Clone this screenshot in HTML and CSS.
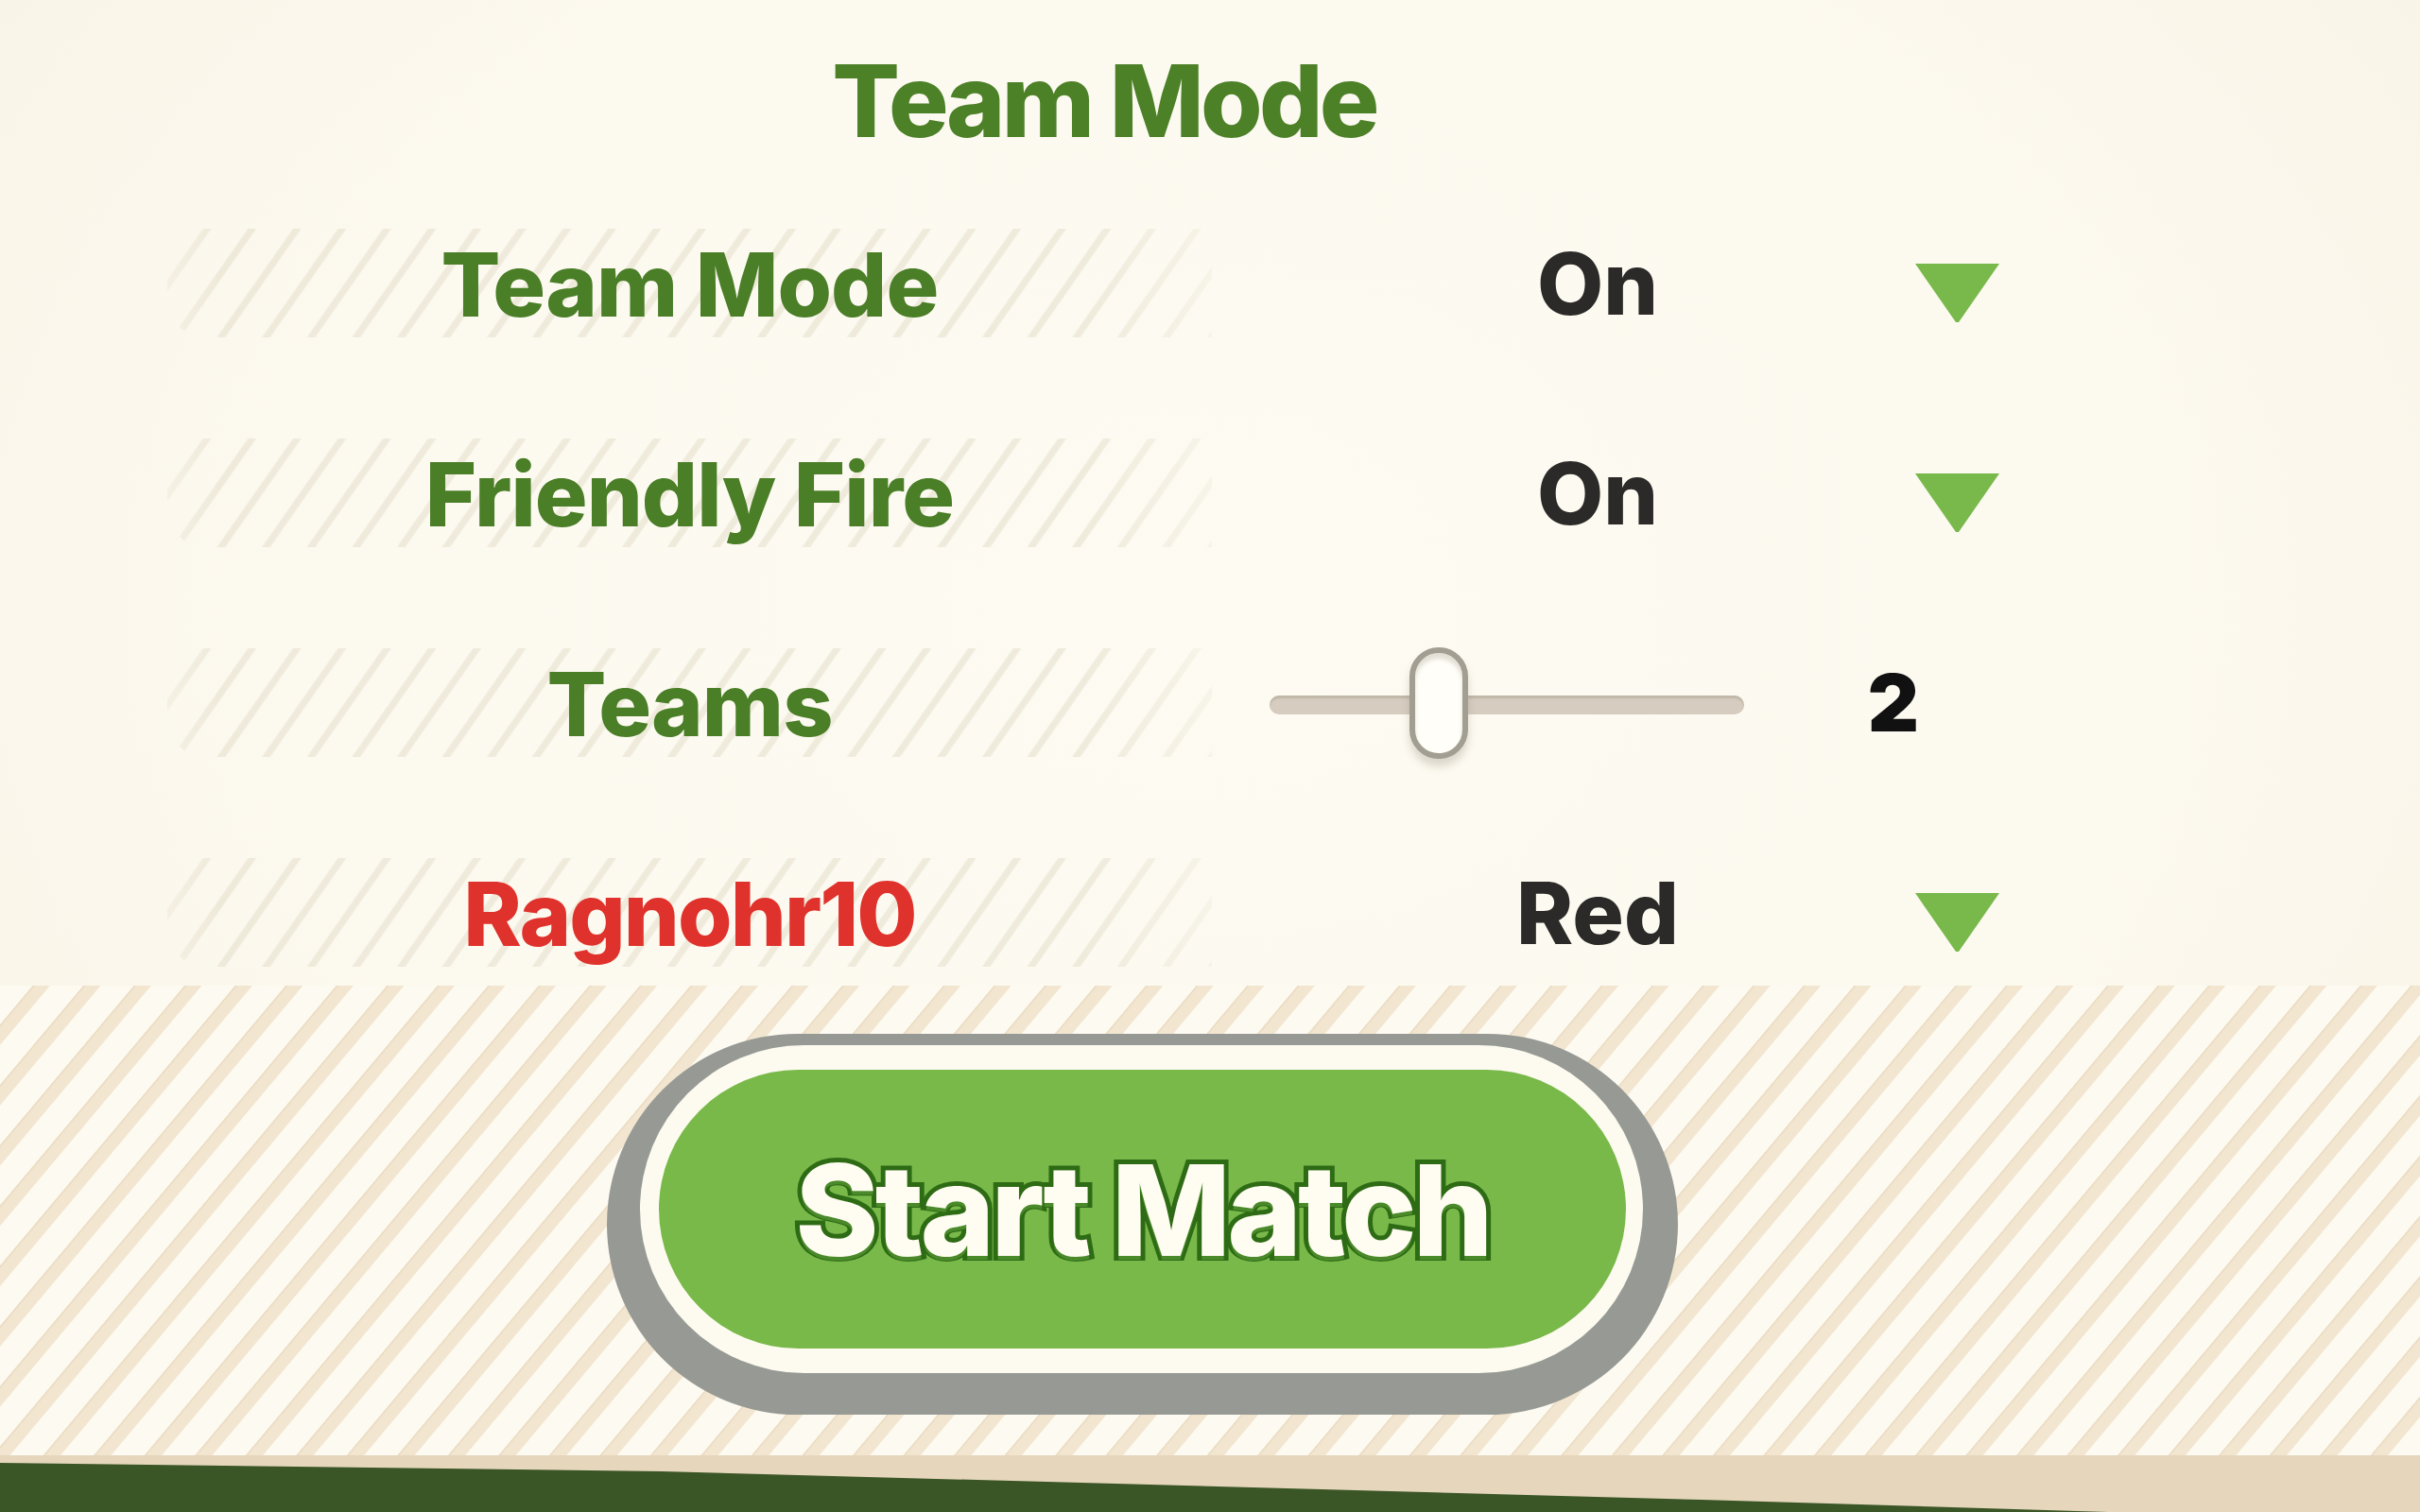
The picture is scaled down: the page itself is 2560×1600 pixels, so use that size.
FILE: index.html
```html
<html lang="en">

<head>
  <meta charset="UTF-8">
  <meta name="viewport" content="width=device-width, initial-scale=1.0">
  <title>Team Mode</title>
  <link rel="stylesheet" href="styles.css">
</head>

<body>
  <div class="screen">
    <section class="settings">
      <h1 class="title">Team Mode</h1>

      <div class="rows">
        <div class="row">
          <div class="label">Team Mode</div>
          <div class="dropdown">
            <span class="value">On</span>
            <svg class="arrow" viewBox="0 0 89 62"><polygon points="0,0 89,0 46,62 43,62" /></svg>
          </div>
        </div>

        <div class="row">
          <div class="label">Friendly Fire</div>
          <div class="dropdown">
            <span class="value">On</span>
            <svg class="arrow" viewBox="0 0 89 62"><polygon points="0,0 89,0 46,62 43,62" /></svg>
          </div>
        </div>

        <div class="row">
          <div class="label">Teams</div>
          <div class="slider-field">
            <div class="slider">
              <div class="track"></div>
              <div class="thumb" style="left: 35.7%"></div>
            </div>
            <span class="count">2</span>
          </div>
        </div>

        <div class="row">
          <div class="label player">Ragnohr10</div>
          <div class="dropdown">
            <span class="value">Red</span>
            <svg class="arrow" viewBox="0 0 89 62"><polygon points="0,0 89,0 46,62 43,62" /></svg>
          </div>
        </div>
      </div>
    </section>

    <section class="band">
      <button class="start-btn" type="button">
        <span class="start-ring">
          <span class="start-face">Start Match</span>
        </span>
      </button>
    </section>

    <div class="ground">
      <div class="grass"></div>
    </div>
  </div>
</body>

</html>
```

FILE: styles.css
```css
body {
  margin: 0;
  padding: 0;
  background-color: #fcf9ef;
  font-family: Inter, Lato, "Noto Sans", sans-serif;
  overflow: hidden;
}

.screen {
  width: 2560px;
  height: 1600px;
  display: flex;
  flex-direction: column;
  background:
    radial-gradient(ellipse at 50% 40%, #fdfbf2 0%, #fcf9ef 55%, #f7f2e4 100%);
}

/* settings list */

.settings {
  box-sizing: border-box;
  height: 1043px;
  width: 2159px;
  padding-left: 177px;
  padding-top: 54px;
}

.title {
  margin: 0;
  font-size: 106px;
  line-height: 1;
  font-weight: 800;
  letter-spacing: -0.035em;
  text-align: center;
  color: #4d8128;
}

.rows {
  display: flex;
  flex-direction: column;
  gap: 107px;
  margin-top: 82px;
}

.row {
  display: flex;
  align-items: center;
  height: 115px;
}

.label {
  width: 1105px;
  height: 115px;
  line-height: 118px;
  text-align: center;
  font-size: 93px;
  font-weight: 800;
  letter-spacing: -0.01em;
  color: #4a7e27;
  border-radius: 40px 0 0 40px;
  background-image: repeating-linear-gradient(125deg,
      rgba(228, 222, 202, 0) 0px,
      rgba(228, 222, 202, 0) 30px,
      rgba(228, 222, 202, 0.55) 32px,
      rgba(228, 222, 202, 0.55) 37px,
      rgba(228, 222, 202, 0) 39px);
  -webkit-mask-image: linear-gradient(to right, rgba(0, 0, 0, 0.5) 0%, #000 5%, #000 88%, rgba(0, 0, 0, 0.4) 100%);
  mask-image: linear-gradient(to right, rgba(0, 0, 0, 0.5) 0%, #000 5%, #000 88%, rgba(0, 0, 0, 0.4) 100%);
}

.label.player {
  color: #e0322c;
  letter-spacing: -0.02em;
}

.dropdown {
  display: flex;
  align-items: center;
  margin-left: 98px;
}

.value {
  width: 620px;
  text-align: center;
  font-size: 91px;
  line-height: 118px;
  font-weight: 800;
  color: #2b2a28;
}

.arrow {
  width: 89px;
  height: 62px;
  margin-left: 26px;
  margin-top: 20px;
  fill: #79b94b;
}

/* slider */

.slider-field {
  display: flex;
  align-items: center;
  margin-left: 61px;
}

.slider {
  position: relative;
  width: 502px;
  height: 118px;
  display: flex;
  align-items: center;
}

.track {
  width: 100%;
  height: 20px;
  margin-top: 4px;
  border-radius: 10px;
  background: #d6cdc0;
  box-shadow: inset 0 3px 2px rgba(150, 140, 120, 0.35);
}

.thumb {
  position: absolute;
  top: 0;
  width: 62px;
  height: 118px;
  box-sizing: border-box;
  transform: translateX(-50%);
  border: 6px solid #a29e92;
  border-radius: 31px;
  background: #fffef8;
  box-shadow: inset 0 6px 4px rgba(140, 130, 110, 0.25), 0 8px 8px rgba(120, 110, 90, 0.25);
}

.count {
  width: 120px;
  margin-left: 98px;
  text-align: center;
  font-size: 84px;
  line-height: 118px;
  font-weight: 900;
  color: #111;
}

/* start button area */

.band {
  box-sizing: border-box;
  height: 497px;
  padding-top: 51px;
  padding-left: 642px;
  background-color: #fdfaf1;
  background-image: repeating-linear-gradient(130deg,
      rgba(240, 226, 202, 0) 0px,
      rgba(240, 226, 202, 0) 26px,
      #eadac0 27px,
      #f2e6d0 29px,
      #f2e6d0 40px,
      rgba(240, 226, 202, 0) 41px);
}

.start-btn {
  display: block;
  padding: 12px 37px 44px 35px;
  border: none;
  border-radius: 999px;
  background: #979a94;
  cursor: pointer;
  font-family: inherit;
}

.start-ring {
  display: block;
  padding: 26px 18px 26px 20px;
  border-radius: 999px;
  background: #fdfbf0;
}

.start-face {
  display: flex;
  align-items: center;
  justify-content: center;
  width: 1023px;
  height: 295px;
  border-radius: 999px;
  background: #79b94a;
  font-size: 134px;
  font-weight: 800;
  letter-spacing: -0.03em;
  color: #fffdf1;
  -webkit-text-stroke: 10px #2e6b15;
  paint-order: stroke fill;
  text-shadow: 0 4px 0 #4a8a2a;
}

/* bottom edge */

.ground {
  height: 60px;
  background: #e5d6bc;
}

.grass {
  height: 100%;
  background: #3a5526;
  clip-path: polygon(0 8px, 700px 17px, 1800px 47px, 2560px 70px, 2560px 100%, 0 100%);
}
```
